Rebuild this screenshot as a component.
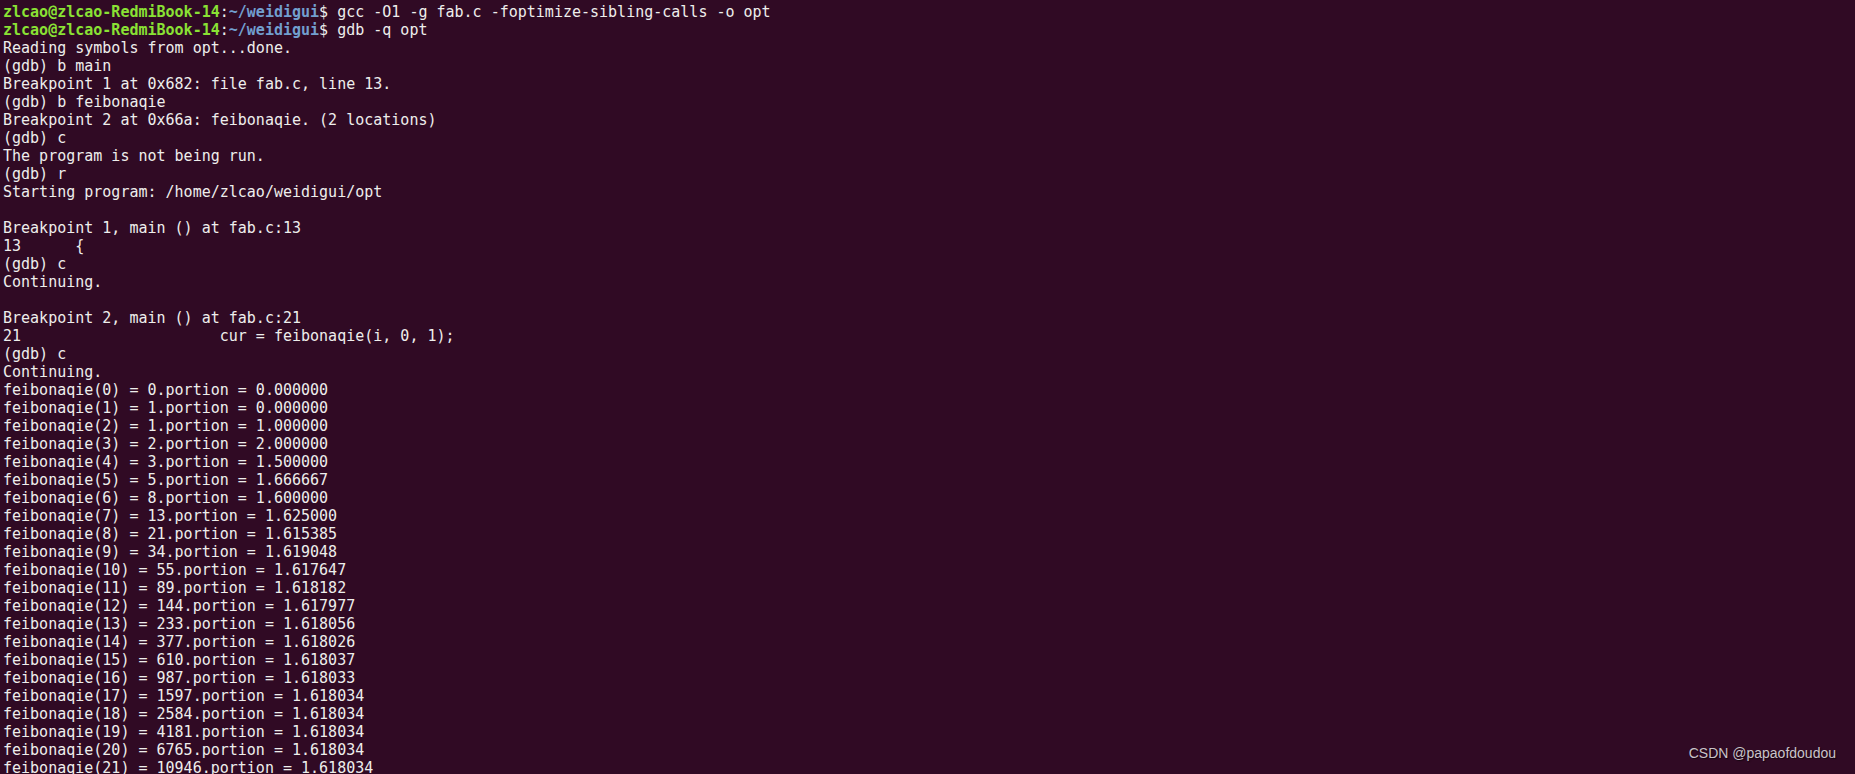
import { FC } from "react";

const fib = [
  [0, "0.000000"],
  [1, "0.000000"],
  [1, "1.000000"],
  [2, "2.000000"],
  [3, "1.500000"],
  [5, "1.666667"],
  [8, "1.600000"],
  [13, "1.625000"],
  [21, "1.615385"],
  [34, "1.619048"],
  [55, "1.617647"],
  [89, "1.618182"],
  [144, "1.617977"],
  [233, "1.618056"],
  [377, "1.618026"],
  [610, "1.618037"],
  [987, "1.618033"],
  [1597, "1.618034"],
  [2584, "1.618034"],
  [4181, "1.618034"],
  [6765, "1.618034"],
  [10946, "1.618034"],
];

const output = [
  "Reading symbols from opt...done.",
  "(gdb) b main",
  "Breakpoint 1 at 0x682: file fab.c, line 13.",
  "(gdb) b feibonaqie",
  "Breakpoint 2 at 0x66a: feibonaqie. (2 locations)",
  "(gdb) c",
  "The program is not being run.",
  "(gdb) r",
  "Starting program: /home/zlcao/weidigui/opt",
  "",
  "Breakpoint 1, main () at fab.c:13",
  "13      {",
  "(gdb) c",
  "Continuing.",
  "",
  "Breakpoint 2, main () at fab.c:21",
  "21                      cur = feibonaqie(i, 0, 1);",
  "(gdb) c",
  "Continuing.",
  ...fib.map(([v, r], i) => `feibonaqie(${i}) = ${v}.portion = ${r}`),
];

const Prompt: FC<{ cmd: string }> = ({ cmd }) => (
  <div className="whitespace-pre h-[18px]">
    <span className="font-bold text-[#8ae234]">zlcao@zlcao-RedmiBook-14</span>
    <span>:</span>
    <span className="font-bold text-[#729fcf]">~/weidigui</span>
    <span>$ {cmd}</span>
  </div>
);

export default function App() {
  return (
    <div className="relative w-[1855px] h-[774px] overflow-hidden bg-[#300a24] text-[#eeeeec]">
      <div className="pl-[3px] pt-[3px] font-['DejaVu_Sans_Mono',monospace] text-[15px] leading-[18px]">
        <Prompt cmd="gcc -O1 -g fab.c -foptimize-sibling-calls -o opt" />
        <Prompt cmd="gdb -q opt" />
        {output.map((line, i) => (
          <div key={i} className="whitespace-pre h-[18px]">
            {line}
          </div>
        ))}
      </div>
      {/* watermark */}
      <div className="absolute right-[19px] bottom-[10px] font-['Liberation_Sans',Arial,sans-serif] text-[14px] text-[#c9c3c8] [text-shadow:1px_1px_1px_rgba(0,0,0,0.6)]">
        CSDN @papaofdoudou
      </div>
    </div>
  );
}
